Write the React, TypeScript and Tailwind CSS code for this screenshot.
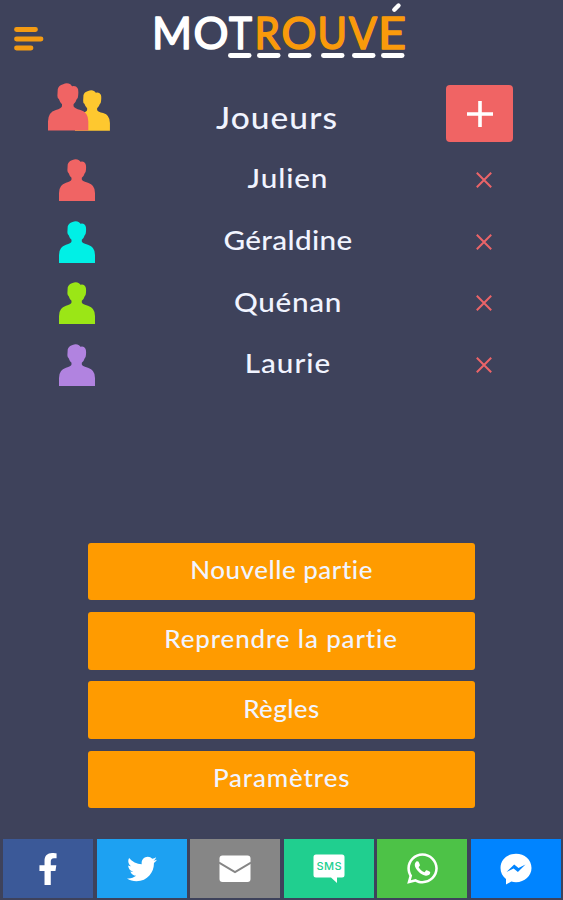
import { FaFacebookF, FaTwitter, FaWhatsapp } from 'react-icons/fa';

const PERSON_PATH =
  'M0 42V34Q0 25.8 7 23.8Q12 22.5 12.5 20.5V18.7Q10.3 16.5 9.7 14.2Q8.3 13.6 8.4 11L8.7 5.5Q9.5 2 13.5 1Q17 -.8 20 1.2L21.5 2.8Q25 2 26.3 4.5Q27.5 6 26.9 11.2Q26.8 13.8 25.6 14.4Q25 16.8 22.8 18.7V20.5Q23.6 22.5 29 23.8Q36 25.8 36 34V42Z';

const players = [
  { name: 'Julien', color: '#f06464', text: 'tracking-[0.8px]' },
  { name: 'Géraldine', color: '#00f0e6', text: 'tracking-[0.3px]' },
  { name: 'Quénan', color: '#9be616', text: 'tracking-[0.6px]' },
  { name: 'Laurie', color: '#b183e0', text: 'tracking-[0.9px]' },
];

const actions = [
  { label: 'Nouvelle partie', text: 'tracking-[0.5px]' },
  { label: 'Reprendre la partie', text: 'tracking-[0.8px]' },
  { label: 'Règles', text: 'tracking-[0.4px]' },
  { label: 'Paramètres', text: 'tracking-[0.8px]' },
];

const logoLetters = [
  { char: 'M', x: 152, width: 40, color: '#ffffff' },
  { char: 'O', x: 193.5, width: 35, color: '#ffffff' },
  { char: 'T', x: 229, width: 23, color: '#ffffff' },
  { char: 'R', x: 254.5, width: 25.5, color: '#f99a0b' },
  { char: 'O', x: 281.5, width: 35, color: '#f99a0b' },
  { char: 'U', x: 317.5, width: 29.5, color: '#f99a0b' },
  { char: 'V', x: 349, width: 28, color: '#f99a0b' },
  { char: 'E', x: 378, width: 28, color: '#f99a0b' },
];

const logoDashes = [228, 257, 288, 321, 352, 381];

function Logo() {
  return (
    <svg width="260" height="62" viewBox="150 0 260 62" className="shrink-0">
      {logoLetters.map((l, i) => (
        <text
          key={i}
          x={l.x}
          y="49"
          textLength={l.width}
          lengthAdjust="spacingAndGlyphs"
          fill={l.color}
          stroke={l.color}
          strokeWidth="1.6"
          strokeLinejoin="round"
          className="font-['Lato',sans-serif] text-[44px] leading-none font-normal"
        >
          {l.char}
        </text>
      ))}
      {logoDashes.map((x) => (
        <rect key={x} x={x} y="53" width="23.5" height="5" rx="2.4" fill="#fff" />
      ))}
      <path d="M394.3 9.7L398.5 5.5" stroke="#fff" strokeWidth="4.4" strokeLinecap="round" />
    </svg>
  );
}

function MenuIcon() {
  return (
    <svg width="30" height="26" viewBox="0 0 30 26" stroke="#f49b13" strokeWidth="4.8" strokeLinecap="round">
      <path d="M2.5 3.5H21.5M2.5 13H27M2.5 22H17" />
    </svg>
  );
}

function PersonIcon({ color }: { color: string }) {
  return (
    <svg width="36" height="42" viewBox="0 0 36 42">
      <path d={PERSON_PATH} fill={color} />
    </svg>
  );
}

function GroupIcon() {
  return (
    <svg width="62" height="48" viewBox="0 0 62 48">
      <path d={PERSON_PATH} fill="#fec82f" transform="translate(27 7) scale(.97 .97)" />
      <path d={PERSON_PATH} fill="#f06464" transform="scale(1.12 1.13)" />
    </svg>
  );
}

function CloseIcon() {
  return (
    <svg width="16" height="16" viewBox="0 0 16 16" stroke="#eb6468" strokeWidth="2">
      <path d="M.8.8L15.2 15.2M15.2.8L.8 15.2" />
    </svg>
  );
}

function MailIcon() {
  return (
    <svg width="32" height="28" viewBox="0 0 32 28">
      <rect x=".5" y=".5" width="31" height="26.5" rx="3" fill="#fff" />
      <path d="M0 7.5L16 17L32 7.5" fill="none" stroke="#868686" strokeWidth="2" />
    </svg>
  );
}

function SmsIcon() {
  return (
    <svg width="32" height="30" viewBox="0 0 32 30">
      <path d="M3 .5H29Q31.5 .5 31.5 3V21Q31.5 23.5 29 23.5H24V29L18 23.5H3Q.5 23.5 .5 21V3Q.5 .5 3 .5Z" fill="#fff" />
      <text x="3.5" y="16" textLength="25" fill="#20cf8f" className="font-['Inter',sans-serif] text-[11px] font-medium">
        SMS
      </text>
    </svg>
  );
}

function MessengerIcon() {
  return (
    <svg width="32" height="32" viewBox="0 0 32 32">
      <path d="M16 .8C7.4 .8 .5 6.8 .5 15C.5 19.5 2.6 23.4 6 26V31.5L11.3 28.6C12.8 29 14.4 29.2 16 29.2C24.6 29.2 31.5 22.9 31.5 15C31.5 6.8 24.6 .8 16 .8Z" fill="#fff" />
      <path d="M6.5 19L14.2 11.5L18.5 15L25.5 11.5L17.9 19L13.6 15.5Z" fill="#0084ff" />
    </svg>
  );
}

const shares = [
  { name: 'Facebook', bg: 'bg-[#3b5998]', icon: <FaFacebookF size={32} /> },
  { name: 'Twitter', bg: 'bg-[#1da1f2]', icon: <FaTwitter size={30} /> },
  { name: 'Mail', bg: 'bg-[#868686]', icon: <MailIcon /> },
  { name: 'SMS', bg: 'bg-[#20cf8f]', icon: <SmsIcon /> },
  { name: 'WhatsApp', bg: 'bg-[#4dc247]', icon: <FaWhatsapp size={35} /> },
  { name: 'Messenger', bg: 'bg-[#0084ff]', icon: <MessengerIcon /> },
];

export default function App() {
  return (
    <div className="flex h-[900px] w-[563px] flex-col overflow-hidden bg-[#3e425b] font-['Lato',sans-serif] font-medium text-[#f1f4ff]">
      <header className="flex h-[83px] items-start pl-3.5">
        <button aria-label="Menu" className="mt-[26px] w-[136px]">
          <MenuIcon />
        </button>
        <Logo />
      </header>

      <section>
        <div className="flex h-[66px] items-start pl-12">
          <div className="w-[108px]">
            <GroupIcon />
          </div>
          <h1 className="mt-[15px] w-[242px] scale-x-108 text-center text-[31px] leading-[38px] tracking-[1px]">
            Joueurs
          </h1>
          <button
            aria-label="Ajouter"
            className="mt-0.5 ml-12 flex h-[57px] w-[67px] items-center justify-center rounded bg-[#f06464]"
          >
            <svg width="26" height="26" viewBox="0 0 26 26" stroke="#fff" strokeWidth="3.6">
              <path d="M13 0V26M0 13H26" />
            </svg>
          </button>
        </div>

        <ul>
          {players.map((p) => (
            <li key={p.name} className="flex h-[61.7px] items-center pl-[58.5px]">
              <PersonIcon color={p.color} />
              <span
                className={`ml-[61px] w-[264px] scale-x-110 pb-[3px] text-center text-[27px] leading-8 ${p.text}`}
              >
                {p.name}
              </span>
              <button aria-label="Supprimer" className="ml-[56.5px]">
                <CloseIcon />
              </button>
            </li>
          ))}
        </ul>
      </section>

      <nav className="mt-auto mb-[31px] flex flex-col gap-[11.7px] px-[88px]">
        {actions.map((a) => (
          <button key={a.label} className="h-[57.5px] rounded-[3px] bg-[#ff9b00] pb-[3px] text-[24px] leading-7">
            <span className={`inline-block scale-x-108 ${a.text}`}>{a.label}</span>
          </button>
        ))}
      </nav>

      <footer className="flex gap-[3.5px] pr-0.5 pb-0.5 pl-[3px]">
        {shares.map((s) => (
          <button
            key={s.name}
            aria-label={s.name}
            className={`flex h-[59px] flex-1 items-center justify-center text-white ${s.bg}`}
          >
            {s.icon}
          </button>
        ))}
      </footer>
    </div>
  );
}
